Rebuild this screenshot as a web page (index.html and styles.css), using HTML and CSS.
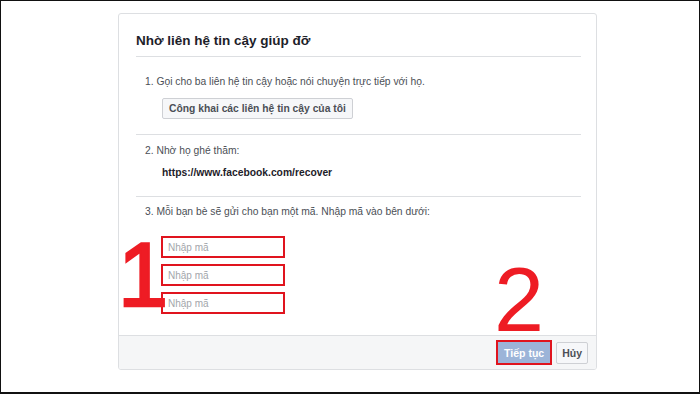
FILE: index.html
```html
<!DOCTYPE html>
<html lang="vi">
<head>
  <meta charset="UTF-8">
  <meta name="viewport" content="width=device-width, initial-scale=1.0">
  <title>Nhờ liên hệ tin cậy giúp đỡ</title>
  <link rel="stylesheet" href="styles.css">
</head>
<body>
  <div class="frame">
    <div class="card">
      <div class="card-body">
        <h2 class="title">Nhờ liên hệ tin cậy giúp đỡ</h2>

        <div class="step">
          <p class="step-text">1. Gọi cho ba liên hệ tin cậy hoặc nói chuyện trực tiếp với họ.</p>
          <button class="btn-plain">Công khai các liên hệ tin cậy của tôi</button>
        </div>

        <div class="step">
          <p class="step-text">2. Nhờ họ ghé thăm:</p>
          <p class="link">https://www.facebook.com/recover</p>
        </div>

        <div class="step step-last">
          <p class="step-text">3. Mỗi bạn bè sẽ gửi cho bạn một mã. Nhập mã vào bên dưới:</p>
          <div class="codes">
            <input type="text" class="code" placeholder="Nhập mã">
            <input type="text" class="code" placeholder="Nhập mã">
            <input type="text" class="code" placeholder="Nhập mã">
          </div>
        </div>
      </div>

      <div class="card-footer">
        <button class="btn-primary">Tiếp tục</button>
        <button class="btn-cancel">Hủy</button>
      </div>
    </div>

    <span class="mark mark-1">1</span>
    <span class="mark mark-2">2</span>
  </div>
</body>
</html>
```

FILE: styles.css
```css
* {
  box-sizing: border-box;
}
body {
  margin: 0;
  background-color: #fff;
  font-family: 'Liberation Sans', Arial, sans-serif;
}
.frame {
  position: relative;
  width: 700px;
  height: 394px;
  border: 1px solid #111;
  border-bottom-width: 2px;
  padding: 12px 0 0 117px;
}
.card {
  width: 479px;
  background-color: #fff;
  border: 1px solid #dddfe2;
  border-radius: 3px;
  overflow: hidden;
}
.card-body {
  padding: 0 15px 21px 17px;
}
.title {
  margin: 0;
  padding: 18px 0 6px;
  font-size: 13.5px;
  line-height: 18px;
  font-weight: 700;
  color: #1d2129;
  border-bottom: 1px solid #dddfe2;
}
.step {
  padding: 16px 0 15px 9px;
  border-bottom: 1px solid #dddfe2;
}
.step + .step {
  padding-top: 7px;
  padding-bottom: 14px;
}
.step-last {
  border-bottom: none;
  padding-top: 6px !important;
  padding-bottom: 0 !important;
}
.step-text {
  margin: 0;
  font-size: 10.3px;
  line-height: 18px;
  color: #4b4f56;
}
.btn-plain {
  display: block;
  margin: 7px 0 0 17px;
  height: 21px;
  padding: 0 6px;
  font-family: inherit;
  font-size: 10.3px;
  font-weight: 700;
  color: #4b4f56;
  background-color: #f6f7f9;
  border: 1px solid #ced0d4;
  border-radius: 2px;
}
.link {
  margin: 4px 0 0 17px;
  font-size: 10.3px;
  line-height: 18px;
  font-weight: 700;
  color: #1d2129;
}
.codes {
  display: flex;
  flex-direction: column;
  gap: 6px;
  margin: 15px 0 0 16px;
}
.code {
  width: 124px;
  height: 22px;
  padding: 0 5px;
  font-family: inherit;
  font-size: 10px;
  border: 2px solid #e0141e;
  outline: none;
}
.code::placeholder {
  color: #a3a6ab;
}
.card-footer {
  display: flex;
  justify-content: flex-end;
  align-items: center;
  gap: 4px;
  height: 34px;
  padding: 0 8px 0 0;
  background-color: #f5f6f7;
  border-top: 1px solid #dddfe2;
}
.btn-primary {
  height: 25px;
  padding: 0 6px;
  font-family: inherit;
  font-size: 10.5px;
  font-weight: 700;
  color: #fff;
  background-color: #9cb4d8;
  border: 2px solid #e0141e;
  box-shadow: inset 0 0 0 1px #9cb4d8;
}
.btn-cancel {
  height: 22px;
  padding: 0 5px;
  font-family: inherit;
  font-size: 10.5px;
  font-weight: 700;
  color: #4b4f56;
  background-color: #f6f7f9;
  border: 1px solid #ced0d4;
  border-radius: 2px;
}
.mark {
  position: absolute;
  font-family: 'Liberation Sans', Arial, sans-serif;
  font-size: 90px;
  line-height: 0.8;
  color: #ee1c24;
}
.mark-1 {
  left: 117px;
  top: 238px;
  -webkit-text-stroke: 2.5px #ee1c24;
}
.mark-2 {
  left: 493px;
  top: 263px;
}
```
